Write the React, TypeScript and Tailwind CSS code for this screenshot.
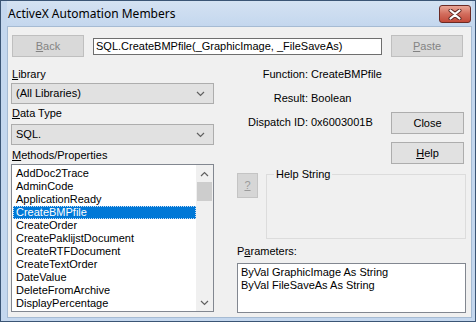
import React from "react";

const METHODS = [
  "AddDoc2Trace",
  "AdminCode",
  "ApplicationReady",
  "CreateBMPfile",
  "CreateOrder",
  "CreatePaklijstDocument",
  "CreateRTFDocument",
  "CreateTextOrder",
  "DateValue",
  "DeleteFromArchive",
  "DisplayPercentage",
];

const Chevron = ({ up = false }: { up?: boolean }) => (
  <svg width="9" height="6" viewBox="0 0 9 6" className="block">
    <polyline
      points={up ? "1,5 4.5,1.5 8,5" : "1,1 4.5,4.5 8,1"}
      fill="none"
      stroke="#606060"
      strokeWidth="1.2"
    />
  </svg>
);

const Combo = ({ value }: { value: string }) => (
  <div className="h-[21px] flex items-center justify-between bg-[#e1e1e1] border border-[#adadad] pl-[4px] pr-[8px]">
    <span>{value}</span>
    <Chevron />
  </div>
);

const Button = ({
  children,
  disabled = false,
  className = "",
}: {
  children: React.ReactNode;
  disabled?: boolean;
  className?: string;
}) => (
  <div
    className={`h-[22px] flex items-center justify-center border ${
      disabled
        ? "bg-[#d9d9d9] border-[#bfbfbf] text-[#838383]"
        : "bg-[#e1e1e1] border-[#adadad] text-black"
    } ${className}`}
  >
    {children}
  </div>
);

export default function App() {
  return (
    <div className="w-[476px] h-[322px] flex flex-col bg-[#c4d7ee] border border-[#3b5575] pl-[6px] pr-[3px] pb-[3px] overflow-hidden font-['Liberation_Sans',Arial,sans-serif] text-[11px] leading-[13px] text-black">
      {/* title bar */}
      <div className="h-[25px] shrink-0 flex justify-between bg-gradient-to-b from-[#d4e2f2] to-[#c4d7ee]">
        <span className="self-center pl-[1px] font-['Noto_Sans',sans-serif] text-[12px] leading-[16px]">
          ActiveX Automation Members
        </span>
        <div className="mt-[4px] mr-[1px] w-[32px] h-[18px] rounded-[3px] border border-[#6b2a24] bg-gradient-to-b from-[#e8a596] via-[#d26c5c] to-[#c24a3a] flex items-center justify-center">
          <svg width="14" height="11" viewBox="0 0 14 11">
            <path
              d="M2.5 1.5 L7 5 L11.5 1.5 M2.5 9.5 L7 6 L11.5 9.5"
              stroke="#5a2520"
              strokeWidth="4"
              fill="none"
              strokeLinecap="round"
            />
            <path
              d="M2.5 1.5 L7 5 L11.5 1.5 M2.5 9.5 L7 6 L11.5 9.5"
              stroke="#ffffff"
              strokeWidth="2.2"
              fill="none"
              strokeLinecap="round"
            />
          </svg>
        </div>
      </div>

      {/* client area */}
      <div className="flex-1 flex flex-col bg-[#f0f0f0] border border-[#a6bbd3]">
        {/* top row */}
        <div className="flex items-center pt-[8px] pl-[4px]">
          <Button disabled className="w-[72px]">
            <span>
              <span className="underline">B</span>ack
            </span>
          </Button>
          <div className="ml-[9px] w-[289px] h-[17px] flex items-center bg-white border border-[#6e6e6e] pl-[2px]">
            SQL.CreateBMPfile(_GraphicImage, _FileSaveAs)
          </div>
          <Button disabled className="ml-[9px] w-[72px]">
            <span>
              <span className="underline">P</span>aste
            </span>
          </Button>
        </div>

        <div className="flex pl-[3px]">
          {/* left column */}
          <div className="w-[203px] flex flex-col">
            <div className="mt-[11px] pl-[1px]">
              <span className="underline">L</span>ibrary
            </div>
            <div className="mt-[2px]">
              <Combo value="(All Libraries)" />
            </div>
            <div className="mt-[3px] pl-[1px]">
              <span className="underline">D</span>ata Type
            </div>
            <div className="mt-[4px]">
              <Combo value="SQL." />
            </div>
            <div className="mt-[4px] pl-[1px]">
              <span className="underline">M</span>ethods/Properties
            </div>
            <div className="mt-[2px] h-[148px] flex bg-white border border-[#828790]">
              <div className="flex-1 pt-[2px] pl-[1px]">
                {METHODS.map((m) => {
                  const sel = m === "CreateBMPfile";
                  return (
                    <div
                      key={m}
                      className={`h-[13px] flex items-center pl-[2px] border ${
                        sel
                          ? "bg-[#0078d7] text-white border-dotted border-[#c8ddf4]"
                          : "border-transparent"
                      }`}
                    >
                      {m}
                    </div>
                  );
                })}
              </div>
              <div className="w-[17px] flex flex-col bg-[#f0f0f0]">
                <div className="h-[17px] flex items-center justify-center">
                  <Chevron up />
                </div>
                <div className="h-[19px] mx-[1px] bg-[#cdcdcd]" />
                <div className="flex-1" />
                <div className="h-[17px] flex items-center justify-center">
                  <Chevron />
                </div>
              </div>
            </div>
          </div>

          {/* right column */}
          <div className="ml-[23px] w-[229px] flex flex-col">
            <div className="flex">
              <div className="flex-1 mt-[11px] grid grid-cols-[71px_auto] gap-x-[3px] gap-y-[11px] self-start">
                <span className="text-right">Function:</span>
                <span>CreateBMPfile</span>
                <span className="text-right">Result:</span>
                <span>Boolean</span>
                <span className="text-right">Dispatch ID:</span>
                <span>0x6003001B</span>
              </div>
              <div className="w-[73px] mr-[2px] flex flex-col">
                <Button className="mt-[55px]">Close</Button>
                <Button className="mt-[8px]">
                  <span>
                    <span className="underline">H</span>elp
                  </span>
                </Button>
              </div>
            </div>

            <div className="flex">
              <div className="mt-[9px] w-[21px] h-[25px] flex items-center justify-center bg-[#d6d6d6] border border-[#c4c4c4] text-[#9a9a9a]">
                <span className="underline">?</span>
              </div>
              <div className="relative mt-[10px] ml-[8px] w-[200px] h-[65px] border border-[#dcdcdc]">
                <span className="absolute left-[7px] -top-[7px] px-[2px] bg-[#f0f0f0]">
                  Help String
                </span>
              </div>
            </div>

            <div className="mt-[6px]">
              P<span className="underline">a</span>rameters:
            </div>
            <div className="mt-[5px] h-[50px] bg-white border border-[#828790] pl-[3px] pt-[2px]">
              <div>ByVal GraphicImage As String</div>
              <div>ByVal FileSaveAs As String</div>
            </div>
          </div>
        </div>
      </div>
    </div>
  );
}
